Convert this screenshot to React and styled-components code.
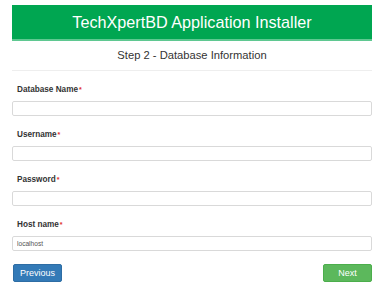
import styled, { createGlobalStyle } from "styled-components";

const GlobalStyle = createGlobalStyle`
  body {
    margin: 0;
    background: #fff;
    font-family: "Liberation Sans", Arial, sans-serif;
  }
`;

const fields = [
  { label: "Database Name", value: "" },
  { label: "Username", value: "" },
  { label: "Password", value: "", type: "password" },
  { label: "Host name", value: "localhost" },
];

const App = () => {
  return (
    <Page>
      <GlobalStyle />
      <Header>TechXpertBD Application Installer</Header>
      <StepTitle>Step 2 - Database Information</StepTitle>
      <Form>
        {fields.map((f) => (
          <Field key={f.label}>
            <Label>
              {f.label}
              <Required>*</Required>
            </Label>
            <Input type={f.type || "text"} defaultValue={f.value} />
          </Field>
        ))}
        <Actions>
          <Button $color="#337ab7" $border="#2e6da4">Previous</Button>
          <Button $color="#5cb85c" $border="#4cae4c">Next</Button>
        </Actions>
      </Form>
    </Page>
  );
};

export default App;

const Page = styled.div`
  padding: 5px 13px 0 12px;
  display: flex;
  flex-direction: column;
`;

const Header = styled.div`
  height: 36px;
  box-sizing: border-box;
  padding-top: 1px;
  background: #00a651;
  border-bottom: 2px solid #5fc891;
  color: #fff;
  font-size: 16.2px;
  display: flex;
  align-items: center;
  justify-content: center;
`;

const StepTitle = styled.div`
  height: 30px;
  box-sizing: border-box;
  padding-bottom: 1px;
  border-bottom: 1px solid #eeeeee;
  color: #333;
  font-size: 11.2px;
  display: flex;
  align-items: center;
  justify-content: center;
`;

const Form = styled.div`
  display: flex;
  flex-direction: column;
  padding-top: 14px;
`;

const Field = styled.div`
  display: flex;
  flex-direction: column;
  margin-bottom: 14px;
`;

const Label = styled.label`
  font-size: 8.2px;
  line-height: 10px;
  font-weight: bold;
  color: #333;
  padding-left: 5px;
  margin-bottom: 6px;
`;

const Required = styled.span`
  color: #e0302c;
  font-size: 7px;
  vertical-align: top;
  margin-left: 1px;
`;

const Input = styled.input`
  box-sizing: border-box;
  height: 15px;
  width: 100%;
  border: 1px solid #d9d9d9;
  border-radius: 2px;
  padding: 0 4px;
  font-family: "Liberation Sans", Arial, sans-serif;
  font-size: 6.6px;
  color: #555;
  outline: none;
`;

const Actions = styled.div`
  display: flex;
  justify-content: space-between;
  padding-left: 1px;
  margin-top: -1px;
`;

const Button = styled.button`
  width: 49px;
  height: 18px;
  padding: 0;
  background: ${(p) => p.$color};
  border: 1px solid ${(p) => p.$border};
  border-radius: 2px;
  color: #fff;
  font-family: "Liberation Sans", Arial, sans-serif;
  font-size: 9px;
  cursor: pointer;
`;
